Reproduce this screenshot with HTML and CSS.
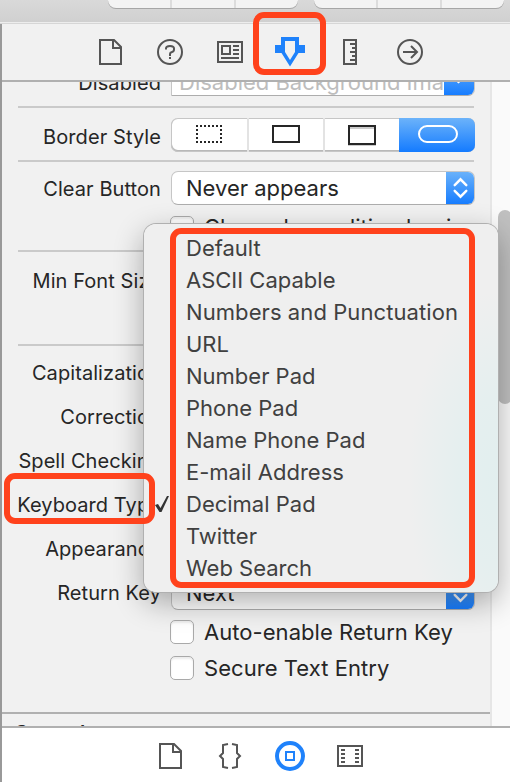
FILE: index.html
```html
<!DOCTYPE html>
<html lang="en">
<head>
<meta charset="utf-8">
<title>Attributes Inspector</title>
<link rel="stylesheet" href="styles.css">
</head>
<body>
<div class="window">
  <header class="titlebar">
    <div class="group"><i></i><i></i><i></i></div>
    <div class="group"><i></i><i></i><i></i></div>
  </header>
  <div class="inspector">
    <nav class="tabs">
      <svg viewBox="0 0 60 56"><path d="M20 16h14l7 7v17H20zM33 17v7h7"/></svg>
      <svg viewBox="0 0 60 56"><circle cx="30" cy="28" r="12"/><path d="M26 25.500v-1q0-2.500 4-2.500t4 2.500v1q0 2-2 2.500t-2 2v2M30 33v2"/></svg>
      <svg viewBox="0 0 60 56"><path d="M18 18h24v20H18zM22 22h8v8h-8zM33 22h6M33 26h6M33 30h6M21 34h18"/></svg>
      <svg viewBox="0 0 60 56"><path class="blue" fill-rule="evenodd" d="M21 13h18v8h6v8h-6.500L30 42.500 21.500 29H15v-8h6zM25 17v11l5 8 5-8V17z"/></svg>
      <svg viewBox="0 0 60 56"><path d="M24 16h12v24H24zM30 20h6M32 24h4M30 28h6M32 32h4M30 36h6"/></svg>
      <svg viewBox="0 0 60 56"><circle cx="30" cy="28" r="12"/><path d="M23 28h13M31 22l6 6-6 6"/></svg>
    </nav>
    <main class="content">
      <div class="form">
        <div class="row first"><label>Disabled</label><div class="select combo"><span>Disabled Background Ima</span><b><svg viewBox="0 0 30 34"><path d="M9 14l6 6 6-6"/></svg></b></div></div>
        <hr>
        <div class="row style"><label>Border Style</label>
          <div class="segments">
            <span><svg viewBox="0 0 76 34"><path class="dots" d="M25 8h26M25 24h26M26 11v12M50 11v12"/></svg></span>
            <span><svg viewBox="0 0 76 34"><path d="M25 8h26v16H25z"/></svg></span>
            <span><svg viewBox="0 0 76 34"><path class="shade" d="M26 10h24M24 27h28"/><path d="M25 8h26v18H25z"/></svg></span>
            <span class="on"><svg viewBox="0 0 76 34"><rect x="20" y="8" width="38" height="16" rx="8"/></svg></span>
          </div>
        </div>
        <hr>
        <div class="row tall"><label>Clear Button</label><div class="select"><span>Never appears</span><b><svg viewBox="0 0 30 34"><path d="M9 14l6-6 6 6M9 20l6 6 6-6"/></svg></b></div></div>
        <div class="row checkrow clear"><div class="check"></div><span>Clear when editing begins</span></div>
        <hr>
        <div class="row min"><label>Min Font Size</label></div>
        <hr>
        <div class="fields">
          <div class="row"><label>Capitalization</label></div>
          <div class="row"><label>Correction</label></div>
          <div class="row"><label>Spell Checking</label></div>
          <div class="row"><label>Keyboard Type</label></div>
          <div class="row"><label>Appearance</label></div>
          <div class="row"><label>Return Key</label><div class="select"><span>Next</span><b><svg viewBox="0 0 30 34"><path d="M9 14l6-6 6 6M9 19l6 6 6-6"/></svg></b></div></div>
        </div>
        <div class="row checkrow"><div class="check"></div><span>Auto-enable Return Key</span></div>
        <div class="row checkrow"><div class="check"></div><span>Secure Text Entry</span></div>
        <h2>Control</h2>
      </div>
      <div class="track"><div class="thumb"></div></div>
    </main>
    <footer class="tabs library">
      <svg viewBox="0 0 60 56"><path d="M20 16h14l7 7v17H20zM33 17v7h7"/></svg>
      <svg viewBox="0 0 60 56"><path d="M28 16l-5 1v8l-3 3 3 3v8l5 1M32 16l5 1v8l3 3-3 3v8l-5 1"/></svg>
      <svg viewBox="0 0 60 56"><circle class="ring" cx="30" cy="28" r="13"/><path class="square" d="M26 24h8v8h-8z"/></svg>
      <svg viewBox="0 0 60 56"><path d="M18 18h24v20H18zM21 22h4M21 26h4M21 30h4M21 34h4M35 22h4M35 26h4M35 30h4M35 34h4"/></svg>
    </footer>
  </div>

  <ul class="menu">
    <li>Default</li>
    <li>ASCII Capable</li>
    <li class="wide">Numbers and Punctuation</li>
    <li>URL</li>
    <li>Number Pad</li>
    <li>Phone Pad</li>
    <li>Name Phone Pad</li>
    <li>E-mail Address</li>
    <li class="checked"><svg viewBox="0 0 16 18"><path d="M1 10l3-1 2.500 4L13 1h2L7.500 17H5.500z"/></svg>Decimal Pad</li>
    <li>Twitter</li>
    <li>Web Search</li>
  </ul>

  <div class="mark mark-tab"></div>
  <div class="mark mark-label"></div>
  <div class="mark mark-list"></div>
</div>
</body>
</html>
```

FILE: styles.css
```css
* { box-sizing: border-box; }
body { margin: 0; }

.window {
  position: relative;
  width: 510px;
  height: 782px;
  overflow: hidden;
  display: flex;
  flex-direction: column;
  background: #f1f1f1;
  color: #262626;
  font: 22px/32px Inter, sans-serif;
}

.titlebar {
  height: 24px;
  flex: none;
  display: flex;
  gap: 16px;
  padding-left: 108px;
  background: linear-gradient(#d9d9d9, #d0d0d0 22px, #ededed 22px, #ededed 23px, #d6d6d6 23px);
}
.group {
  display: flex;
  width: 190px;
  height: 8px;
  overflow: hidden;
  background: #f3f3f3;
  border-radius: 0 0 8px 8px;
  box-shadow: 0 1px 0 #a6a6a6;
}
.group i { flex: 1; }
.group i + i { border-left: 2px solid #dcdcdc; }

.inspector {
  flex: 1;
  min-height: 0;
  display: flex;
  flex-direction: column;
  border-left: 2px solid #999;
}
.tabs {
  height: 58px;
  flex: none;
  display: flex;
  padding-left: 78px;
  border-bottom: 2px solid #b0b0b0;
}
.tabs svg {
  width: 60px;
  height: 56px;
  fill: none;
  stroke: #555;
  stroke-width: 2;
}
.tabs .blue { fill: #1f82fb; stroke: none; }
.tabs .ring { stroke: #1f82fb; stroke-width: 4; }
.tabs .square { stroke: #1f82fb; }
.library {
  height: 56px;
  padding-left: 138px;
  border: 0;
  border-top: 2px solid #b0b0b0;
  background: #fff;
}

.content { flex: 1; min-height: 0; display: flex; overflow: hidden; }
.form { flex: 1; height: 644px; }
.track {
  width: 20px;
  padding: 128px 0 0 6px;
  border-left: 2px solid #e6e6e6;
  background: #fafafa;
}
.thumb { width: 14px; height: 194px; background: #c0c0c0; border-radius: 7px; }

hr { height: 2px; margin: 0 16px; border: 0; background: #cacaca; }
.row { height: 44px; display: flex; align-items: center; gap: 10px; }
.row label {
  width: 159px;
  flex: none;
  text-align: right;
  white-space: nowrap;
  font-size: 20px;
  line-height: 24px;
  letter-spacing: .08px;
}
.first { height: 24px; align-items: flex-end; padding-bottom: 10px; }
.first label { margin-bottom: 1px; }
.style { height: 52px; padding-top: 2px; }
.style label { padding-top: 3px; }
.tall { height: 52px; }
.tall label { padding-top: 2px; }
.min { height: 58px; margin-bottom: 34px; }
.fields { padding-top: 5px; }

.select {
  width: 304px;
  height: 34px;
  flex: none;
  display: flex;
  overflow: hidden;
  background: #fff;
  border: 1px solid #c6c6c6;
  border-bottom-color: #adadad;
  border-radius: 7px;
}
.select span {
  flex: 1;
  padding-left: 14px;
  white-space: nowrap;
  overflow: hidden;
}
.select b {
  width: 29px;
  height: 34px;
  margin: -1px -1px -1px 0;
  background: linear-gradient(#6cb3fa, #147bff);
}
.select svg { display: block; width: 29px; height: 34px; fill: none; stroke: #fff; stroke-width: 2.500; stroke-linecap: round; }
.combo { border-radius: 0 7px 7px 0; }
.combo span { padding-left: 7px; color: #bdbdbd; line-height: 25px; padding-top: 7px; }
.combo b { width: 31px; }

.segments {
  display: flex;
  width: 304px;
  height: 34px;
  overflow: hidden;
  background: #fff;
  border-radius: 7px;
  box-shadow: inset 0 0 0 1px #c6c6c6, inset 0 -1px 0 1px #b8b8b8;
}
.segments span { width: 76px; height: 34px; border-left: 2px solid #e3e3e3; }
.segments span:first-child { border-left: 0; }
.segments svg { display: block; width: 76px; height: 34px; fill: none; stroke: #262626; stroke-width: 2; }
.segments span + span:not(.on) svg { margin-left: -1px; }
.segments .dots { stroke-dasharray: 2 2; }
.segments .shade { stroke: #ccc; }
.segments .on { border: 0; background: linear-gradient(#6cb3fa, #147bff); }
.segments .on svg { stroke: #fff; }

.checkrow { height: 36px; padding: 0 0 2px 168px; }
.checkrow span { white-space: nowrap; letter-spacing: .05px; }
.clear { height: 28px; margin-bottom: 8px; padding-bottom: 0; }
.clear span { padding-bottom: 2px; }
.check {
  width: 24px;
  height: 24px;
  flex: none;
  background: #fff;
  border: 1px solid #a9a9a9;
  border-radius: 5px;
  box-shadow: inset 0 2px 2px #ececec;
}
h2 {
  margin: 25px 0 0;
  padding: 6px 12px;
  border-top: 2px solid #b0b0b0;
  font: 600 20px/26px Inter, sans-serif;
}

.menu {
  position: absolute;
  left: 144px;
  top: 224px;
  width: 354px;
  height: 368px;
  margin: 0;
  padding: 8px 0 0 42px;
  list-style: none;
  color: #404040;
  border-radius: 12px;
  background: radial-gradient(ellipse 90px 190px at 100% 70%, #e2efef, #e5efef 45%, #efefef);
  box-shadow: 0 0 0 1px #b0b0b0, 0 10px 30px rgba(0, 0, 0, .32);
}
.menu li { height: 32px; white-space: nowrap; }
.menu .wide { letter-spacing: .08px; }
.checked { position: relative; }
.checked svg { position: absolute; left: -32px; top: 7px; width: 16px; height: 18px; fill: #333; }

.mark { position: absolute; border: 6px solid #ff421c; border-radius: 11px; }
.mark-tab { left: 253px; top: 12px; width: 73px; height: 63px; }
.mark-label { left: 4px; top: 473px; width: 151px; height: 51px; }
.mark-list { left: 170px; top: 228px; width: 305px; height: 360px; }
```
